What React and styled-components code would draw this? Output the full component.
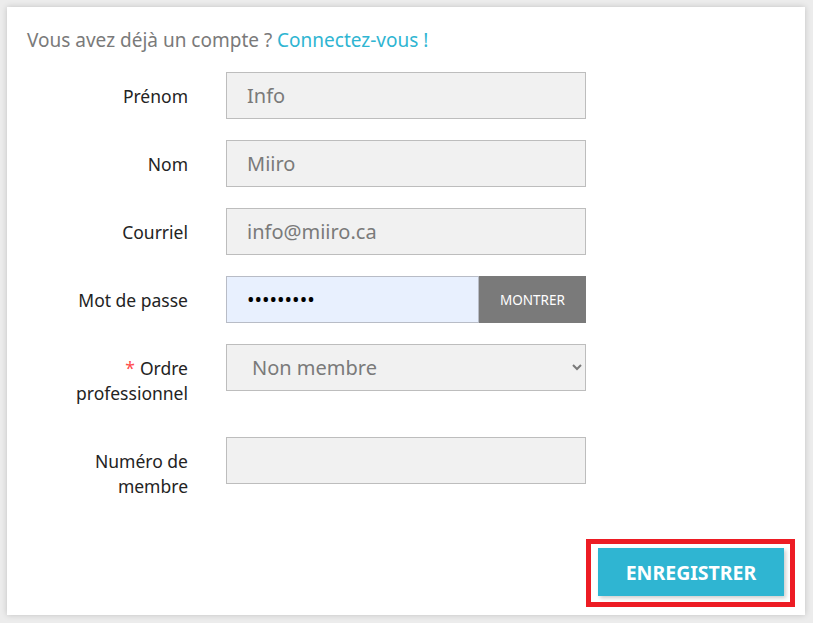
import styled, { createGlobalStyle } from "styled-components";

const GlobalStyle = createGlobalStyle`
  html, body {
    margin: 0;
    padding: 0;
    background: #ececec;
  }
  body {
    font-family: "Noto Sans", "Open Sans", sans-serif;
  }
`;

const Page = styled.div`
  padding: 7px 8px 8px 7px;
  width: 813px;
  height: 623px;
  box-sizing: border-box;
`;

const Card = styled.div`
  background: #fff;
  box-shadow: 0 0 6px rgba(0, 0, 0, 0.18);
  height: 608px;
  box-sizing: border-box;
  padding: 21px 10px 0 20px;
  display: flex;
  flex-direction: column;
`;

const Intro = styled.p`
  margin: 0 0 19px;
  font-size: 19px;
  line-height: 25px;
  color: #7a7a7a;
`;

const Link = styled.a`
  color: #2fb5d2;
  text-decoration: none;
`;

const Form = styled.div`
  display: grid;
  grid-template-columns: 161px 360px;
  column-gap: 38px;
  row-gap: 21px;
  align-items: start;
`;

const Label = styled.label`
  text-align: right;
  font-size: 17.5px;
  line-height: 25px;
  color: #232323;
  padding: 12px 0 10px;
`;

const Star = styled.span`
  color: #ff4c4c;
  margin-right: 5px;
`;

const TextInput = styled.input`
  box-sizing: border-box;
  width: 100%;
  height: 47px;
  margin: 0;
  padding: 0 20px;
  border: 1px solid ${(p) => (p.$filled ? "#b8bcc6" : "#bdbdbd")};
  background: ${(p) => (p.$filled ? "#e8f0fe" : "#f1f1f1")};
  font-family: inherit;
  font-size: 20px;
  color: ${(p) => (p.$filled ? "#000" : "#7a7a7a")};
  outline: none;
`;

const Group = styled.div`
  display: flex;
`;

const ShowButton = styled.button`
  flex: 0 0 107px;
  height: 47px;
  border: none;
  background: #7a7a7a;
  color: #fff;
  font-family: inherit;
  font-size: 13.5px;
  text-transform: uppercase;
  padding: 0;
`;

const Select = styled.select`
  box-sizing: border-box;
  width: 100%;
  height: 47px;
  margin: 0;
  padding: 0 12px 0 21px;
  border: 1px solid #bdbdbd;
  border-radius: 0;
  background: #f1f1f1;
  font-family: inherit;
  font-size: 20px;
  color: #7a7a7a;
  outline: none;
`;

const Footer = styled.div`
  margin-top: auto;
  margin-bottom: 8px;
  display: flex;
  justify-content: flex-end;
`;

const Highlight = styled.div`
  border: 5px solid #ed1c24;
  padding: 4px 6px 6px 7px;
`;

const SubmitButton = styled.button`
  width: 186px;
  height: 48px;
  border: none;
  background: #2fb5d2;
  color: #fff;
  font-family: inherit;
  font-size: 19.5px;
  font-weight: 700;
  text-transform: uppercase;
  box-shadow: 2px 2px 4px rgba(0, 0, 0, 0.2);
  padding: 0;
`;

const fields = [
  { label: "Prénom", value: "Info" },
  { label: "Nom", value: "Miiro" },
  { label: "Courriel", value: "info@miiro.ca" },
];

export default function App() {
  return (
    <>
      <GlobalStyle />
      <Page>
        <Card>
          <Intro>
            Vous avez déjà un compte ? <Link href="#">Connectez-vous !</Link>
          </Intro>
          <Form>
            {fields.map((f) => [
              <Label key={f.label + "-l"}>{f.label}</Label>,
              <TextInput key={f.label + "-i"} defaultValue={f.value} readOnly />,
            ])}
            <Label>Mot de passe</Label>
            <Group>
              <TextInput type="password" $filled defaultValue="123456789" readOnly />
              <ShowButton type="button">Montrer</ShowButton>
            </Group>
            <Label>
              <Star>*</Star>Ordre
              <br />
              professionnel
            </Label>
            <Select defaultValue="non">
              <option value="non">Non membre</option>
            </Select>
            <Label>
              Numéro de
              <br />
              membre
            </Label>
            <TextInput defaultValue="" readOnly />
          </Form>
          <Footer>
            <Highlight>
              <SubmitButton type="button">Enregistrer</SubmitButton>
            </Highlight>
          </Footer>
        </Card>
      </Page>
    </>
  );
}
